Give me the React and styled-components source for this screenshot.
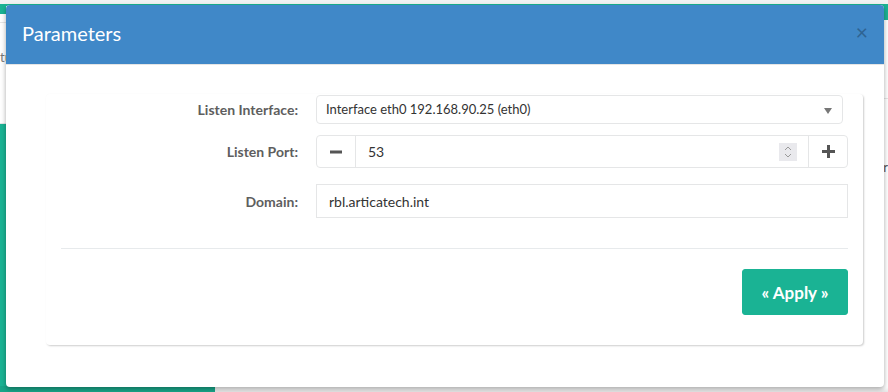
import styled, { createGlobalStyle } from 'styled-components';

const GlobalStyle = createGlobalStyle`
  html, body {
    margin: 0;
    padding: 0;
    background: #ffffff;
  }
  * {
    box-sizing: border-box;
  }
  body {
    font-family: Lato, "Open Sans", "Liberation Sans", sans-serif;
  }
`;

const Page = styled.div`
  position: relative;
  width: 888px;
  height: 392px;
  overflow: hidden;
  background: #ffffff;
  display: flex;
  flex-direction: column;
`;

const TopStrip = styled.div`
  height: 4px;
  background: #f1f2f2;
`;

const NavRow = styled.div`
  height: 16px;
  border-top: 2px solid #1ab394;
  display: flex;
  justify-content: space-between;
`;

const NavTab = styled.div`
  width: ${(p) => p.$w}px;
  height: ${(p) => p.$h}px;
  background: #1ab394;
`;

const Behind = styled.div`
  flex: 1;
  display: grid;
  grid-template-columns: 215px 1fr;
`;

const LeftCol = styled.div`
  display: flex;
  flex-direction: column;
`;

const LeftHead = styled.div`
  height: 102px;
  border-top: 1px solid #e6e6e6;
  margin-top: 2px;
  padding-top: 26px;
  font-size: 13px;
  color: #777;
  border-bottom: 1px solid #e6e6e6;
`;

const Sidebar = styled.div`
  flex: 1;
  background: #1ab394;
  border-bottom: 6px solid #18a689;
`;

const RightCol = styled.div`
  border-top: 1px solid #e6e6e6;
  margin-top: 78px;
  padding-top: 60px;
  text-align: right;
  font-size: 13px;
  color: #555;
  box-shadow: inset 0 -6px 4px -4px rgba(0, 0, 0, 0.12);
`;

const Modal = styled.div`
  position: absolute;
  top: 5px;
  left: 6px;
  width: 878px;
  height: 382px;
  background: #ffffff;
  border-radius: 4px;
  box-shadow: 0 2px 5px rgba(0, 0, 0, 0.35);
  display: flex;
  flex-direction: column;
  overflow: hidden;
`;

const Header = styled.div`
  height: 60px;
  background: #4088c8;
  border-bottom: 1px solid #e5e5e5;
  display: flex;
  align-items: center;
  justify-content: space-between;
  padding: 0 16px 0 16px;
`;

const Title = styled.h4`
  margin: 0;
  font-size: 20px;
  font-weight: 400;
  color: #ffffff;
  padding-bottom: 3px;
`;

const Close = styled.span`
  font-size: 21px;
  font-weight: 400;
  line-height: 1;
  color: #2b5a85;
  opacity: 0.8;
  padding-bottom: 6px;
`;

const Body = styled.div`
  flex: 1;
  padding: 29px 21px 42px 40px;
`;

const Panel = styled.div`
  height: 100%;
  background: #ffffff;
  border-radius: 4px;
  box-shadow: 1px 1px 2px rgba(0, 0, 0, 0.2);
  padding: 1px 15px 0 15px;
  display: flex;
  flex-direction: column;
`;

const Row = styled.div`
  display: grid;
  grid-template-columns: 237px 1fr;
  column-gap: 18px;
  align-items: center;
  margin-bottom: ${(p) => p.$mb}px;
`;

const Label = styled.label`
  text-align: right;
  font-size: 14px;
  font-weight: 700;
  color: #5e5e5e;
`;

const Select = styled.div`
  height: 29px;
  margin-right: 5px;
  border: 1px solid #e5e6e7;
  border-radius: 4px;
  display: flex;
  align-items: center;
  justify-content: space-between;
  padding: 0 10px 1px 9px;
  font-size: 13px;
  color: #333;
`;

const Caret = styled.span`
  width: 0;
  height: 0;
  border-left: 4px solid transparent;
  border-right: 4px solid transparent;
  border-top: 6px solid #777;
  margin-top: 4px;
`;

const InputGroup = styled.div`
  height: 33px;
  border: 1px solid #e5e6e7;
  border-radius: 4px;
  display: flex;
`;

const StepButton = styled.div`
  width: 39px;
  display: flex;
  align-items: center;
  justify-content: center;
  border-${(p) => p.$side}: 1px solid #e5e6e7;
`;

const NumberField = styled.div`
  flex: 1;
  display: flex;
  align-items: center;
  justify-content: space-between;
  padding: 0 11px 0 12px;
  font-size: 14px;
  color: #333;
`;

const Spinner = styled.div`
  width: 18px;
  height: 18px;
  background: #e9e9ed;
  display: flex;
  align-items: center;
  justify-content: center;
`;

const TextInput = styled.div`
  height: 34px;
  border: 1px solid #e5e6e7;
  display: flex;
  align-items: center;
  padding: 0 12px;
  font-size: 14px;
  color: #333;
`;

const Divider = styled.hr`
  border: 0;
  border-top: 1px solid #e7eaec;
  margin: 30px 0 20px 0;
`;

const Actions = styled.div`
  display: flex;
  justify-content: flex-end;
`;

const ApplyButton = styled.button`
  width: 106px;
  height: 46px;
  background: #1ab394;
  border: 1px solid #1ab394;
  border-radius: 3px;
  color: #ffffff;
  font-family: Lato, "Liberation Sans", sans-serif;
  font-size: 17px;
  font-weight: 700;
  cursor: pointer;
`;

export default function App() {
  return (
    <>
      <GlobalStyle />
      <Page>
        <TopStrip />
        <NavRow>
          <NavTab $w={6} $h={8} />
          <NavTab $w={6} $h={14} />
        </NavRow>
        <Behind>
          <LeftCol>
            <LeftHead>tu</LeftHead>
            <Sidebar />
          </LeftCol>
          <RightCol>r</RightCol>
        </Behind>

        <Modal>
          <Header>
            <Title>Parameters</Title>
            <Close>×</Close>
          </Header>
          <Body>
            <Panel>
              <Row $mb={11}>
                <Label>Listen Interface:</Label>
                <Select>
                  <span>Interface eth0 192.168.90.25 (eth0)</span>
                  <Caret />
                </Select>
              </Row>
              <Row $mb={16}>
                <Label>Listen Port:</Label>
                <InputGroup>
                  <StepButton $side="right">
                    <svg width="12" height="12" viewBox="0 0 12 12">
                      <rect x="0" y="4.5" width="12" height="3" fill="#555" />
                    </svg>
                  </StepButton>
                  <NumberField>
                    <span>53</span>
                    <Spinner>
                      <svg width="10" height="14" viewBox="0 0 10 14">
                        <path d="M2 5 L5 2 L8 5 M2 9 L5 12 L8 9" fill="none" stroke="#999" strokeWidth="1" />
                      </svg>
                    </Spinner>
                  </NumberField>
                  <StepButton $side="left">
                    <svg width="13" height="13" viewBox="0 0 13 13">
                      <rect x="0" y="5" width="13" height="3" fill="#555" />
                      <rect x="5" y="0" width="3" height="13" fill="#555" />
                    </svg>
                  </StepButton>
                </InputGroup>
              </Row>
              <Row $mb={0}>
                <Label>Domain:</Label>
                <TextInput>rbl.articatech.int</TextInput>
              </Row>
              <Divider />
              <Actions>
                <ApplyButton>« Apply »</ApplyButton>
              </Actions>
            </Panel>
          </Body>
        </Modal>
      </Page>
    </>
  );
}
